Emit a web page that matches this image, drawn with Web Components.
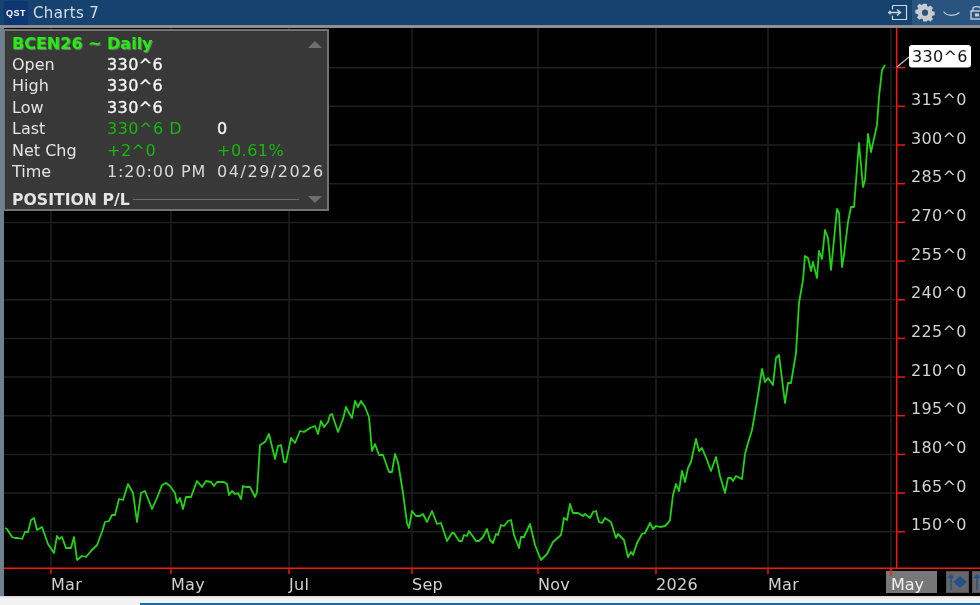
<!DOCTYPE html>
<html>
<head>
<meta charset="utf-8">
<title>Charts 7</title>
<style>
    html, body { margin: 0; padding: 0; background: #000; overflow: hidden; }
</style>
</head>
<body>
<app-window>
    <title-bar slot="top" caption="Charts 7"></title-bar>
    <chart-view>
        <quote-panel symbol="BCEN26 ~ Daily" footer="POSITION P/L">
            <quote-row label="Open" a="330^6"></quote-row>
            <quote-row label="High" a="330^6"></quote-row>
            <quote-row label="Low" a="330^6"></quote-row>
            <quote-row label="Last" a="330^6 D" b="0" tone="up-a"></quote-row>
            <quote-row label="Net Chg" a="+2^0" b="+0.61%" tone="up"></quote-row>
            <quote-row label="Time" a="1:20:00 PM" b="04/29/2026" tone="dim"></quote-row>
        </quote-panel>
    </chart-view>
</app-window>

<script>
const FONT = '"DejaVu Sans", "Liberation Sans", sans-serif';

class AppWindow extends HTMLElement {
    constructor() {
        super();
        this.attachShadow({ mode: 'open' });
        this.shadowRoot.innerHTML = `
<style>
    :host {
        display: flex;
        flex-direction: column;
        width: 980px;
        height: 605px;
        overflow: hidden;
        background: #15426e;
        font-family: ${FONT};
        filter: blur(.35px);
    }
    .body {
        flex: 1;
        display: flex;
        flex-direction: column;
        min-height: 0;
        border-top: 3px solid #8d9092;
    }
    .main { height: 568px; display: flex; border-left: 4px solid #6f8091; }
    .foot {
        flex: 1;
        background: linear-gradient(#d8d8d8, #f3f3f3 30%, #f1f1f1);
        position: relative;
    }
    .foot i {
        position: absolute;
        left: 140px;
        right: 0;
        bottom: 0;
        height: 2px;
        background: #1f6aa5;
    }
</style>
<slot name="top"></slot>
<div class="body">
    <div class="main"><slot></slot></div>
    <div class="foot"><i></i></div>
</div>`;
    }
}

class TitleBar extends HTMLElement {
    constructor() {
        super();
        this.attachShadow({ mode: 'open' });
        this.shadowRoot.innerHTML = `
<style>
    :host {
        display: flex;
        align-items: center;
        height: 25px;
        background: #15426e;
        color: #d5dde5;
    }
    .logo {
        width: 24px;
        height: 24px;
        margin-left: 4px;
        background: #0d3672;
        color: #fff;
        font: bold 9px "Liberation Sans", sans-serif;
        letter-spacing: .5px;
        display: flex;
        align-items: center;
        justify-content: center;
    }
    .caption {
        margin-left: 5px;
        font-size: 15px;
        letter-spacing: .35px;
        flex: 1;
    }
    .tools {
        display: flex;
        align-items: center;
        height: 100%;
    }
    .tools .right {
        display: flex;
        align-items: center;
        gap: 8px;
        height: 100%;
        padding-left: 3px;
        background: #2a5480;
    }
    svg { display: block; overflow: visible; }
    .lock { margin-left: 2px; }
</style>
<div class="logo">QST</div>
<div class="caption"></div>
<div class="tools">
    <svg width="24" height="25" viewBox="0 0 24 25" fill="none" stroke="#cfd6dc" stroke-width="1.2">
        <path d="M4.5 5.5H18.5V19.5H4.5V15.5M4.5 9.5V5.5"/>
        <path d="M0 12.5H12M9 9.5L12.5 12.5L9 15.5M2 10.5V14.5" stroke-width="1.4"/>
    </svg>
    <div class="right">
        <svg width="20" height="25" viewBox="0 0 20 25" fill="#c9cccf">
            <path fill-rule="evenodd" d="M8 3h4l.5 2.6 1.6.7 2.2-1.5 2.8 2.8-1.5 2.2.7 1.6 2.7.6v4l-2.7.5-.7 1.6 1.5 2.2-2.8 2.8-2.2-1.5-1.6.7L12 23H8l-.5-2.6-1.6-.7-2.2 1.5L.9 18.4l1.5-2.2-.7-1.6L-1 14v-4l2.7-.6.7-1.6-1.5-2.2 2.8-2.8 2.2 1.5 1.6-.7zM10 9.5a3.5 3.5 0 1 0 0 7 3.5 3.5 0 0 0 0-7z" transform="translate(1.2 1.2) scale(.88)"/>
        </svg>
        <svg width="17" height="25" viewBox="0 0 17 25" fill="none" stroke="#c6ced6" stroke-width="1.1">
            <path d="M0.5 11.5C4 16.5 12 16.5 16.5 12.5"/>
        </svg>
        <svg class="lock" width="10" height="25" viewBox="0 0 10 25" fill="none" stroke="#c6ced6" stroke-width="1.4">
            <path d="M3 11V8.5C3 6 10 6 10 8.5"/>
            <rect x="1" y="11" width="13" height="8"/>
            <rect x="5" y="13.5" width="4" height="3" fill="#c6ced6" stroke="none"/>
        </svg>
    </div>
</div>`;
        this.shadowRoot.querySelector('.caption').textContent = this.getAttribute('caption');
    }
}

// digitized closing prices, in page pixels
const PRICE_LINE = [
    [5,528],[7,529],[12,537],[15,538],[18,538],[22,539],[25,532],[28,532],[31,520],[34,518],[37,530],[42,527],
    [48,544],[54,553],[57,536],[59,539],[62,537],[66,548],[71,548],[74,537],[77,560],[82,556],[86,557],[91,551],
    [97,545],[102,532],[105,522],[109,521],[112,515],[115,515],[119,499],[123,500],[128,484],[133,493],[137,522],
    [141,493],[145,491],[152,509],[157,498],[162,485],[166,483],[170,486],[175,493],[177,503],[180,498],[183,509],
    [186,497],[191,497],[197,481],[202,487],[206,481],[211,482],[214,486],[217,482],[224,482],[227,484],[229,495],
    [232,491],[235,494],[238,493],[241,499],[243,486],[246,487],[250,487],[255,497],[257,492],[260,445],[265,442],
    [269,434],[275,459],[278,446],[281,445],[284,462],[286,462],[291,438],[295,443],[300,431],[304,432],[310,428],
    [315,426],[318,434],[321,421],[324,427],[328,422],[330,415],[332,414],[338,432],[343,419],[346,407],[349,413],
    [352,418],[355,401],[358,407],[361,401],[365,407],[369,417],[372,451],[375,444],[379,455],[383,455],[389,472],
    [392,472],[395,454],[398,462],[403,493],[407,523],[409,528],[412,511],[416,516],[420,516],[423,514],[427,522],
    [432,511],[437,524],[441,523],[447,541],[452,533],[454,533],[459,541],[462,541],[464,535],[467,536],[469,531],
    [476,541],[479,541],[483,537],[487,529],[490,540],[493,543],[496,534],[498,535],[501,525],[504,526],[508,521],
    [511,520],[514,535],[519,548],[521,537],[524,537],[530,524],[535,545],[541,560],[547,554],[553,542],[561,535],
    [564,518],[567,520],[570,504],[573,513],[578,513],[583,516],[585,514],[590,518],[593,512],[596,511],[599,522],
    [602,523],[605,518],[611,522],[616,538],[618,534],[624,540],[628,557],[631,552],[633,555],[637,543],[642,534],
    [645,533],[650,523],[653,529],[656,526],[660,527],[665,526],[668,523],[670,520],[673,495],[676,484],[679,491],
    [682,471],[685,482],[688,468],[691,462],[696,439],[699,451],[702,448],[707,460],[711,471],[716,457],[720,476],
    [725,493],[728,478],[731,478],[733,481],[736,476],[742,479],[745,454],[748,443],[752,430],[755,413],[758,395],
    [762,369],[765,382],[768,378],[773,385],[776,358],[779,355],[785,403],[788,383],[791,383],[796,353],[799,303],
    [803,280],[805,256],[808,258],[811,271],[813,262],[817,278],[819,251],[822,259],[825,230],[828,238],[831,270],
    [837,209],[839,213],[842,267],[844,255],[848,222],[851,207],[854,207],[859,143],[863,187],[865,180],[868,134],
    [871,152],[877,125],[879,97],[882,70],[885,65]
];
const H_GRID = Array.from({ length: 13 }, (_, i) => 67.7 + i * 38.67);
const Y_LABELS = ['315^0','300^0','285^0','270^0','255^0','240^0','225^0','210^0','195^0','180^0','165^0','150^0'];
const MONTHS = [[51,'Mar'],[171,'May'],[289,'Jul'],[412,'Sep'],[538,'Nov'],[656,'2026'],[768,'Mar']];

class ChartView extends HTMLElement {
    constructor() {
        super();
        this.attachShadow({ mode: 'open' });
        const hLines = H_GRID.map(y => `<path d="M4 ${y}H896" class="grid"/><path d="M897 ${y}H905" class="axis"/>`).join('');
        const vLines = [...MONTHS.map(m => m[0]), 891].map(x => `<path d="M${x} 28V568" class="grid"/><path d="M${x} 568V574" class="axis"/>`).join('');
        const yText = Y_LABELS.map((t, i) => `<text x="911" y="${H_GRID[i + 1] - 1.5}" class="lbl">${t}</text>`).join('');
        const xText = MONTHS.map(m => `<text x="${m[0]}" y="590" class="lbl">${m[1]}</text>`).join('');
        const pts = PRICE_LINE.map(p => p.join(',')).join(' ');
        this.shadowRoot.innerHTML = `
<style>
    :host {
        display: block;
        position: relative;
        width: 976px;
        height: 568px;
        background: #000;
        overflow: hidden;
    }
    svg { display: block; position: absolute; left: 0; top: 0; }
    .grid { stroke: #1f1f1f; stroke-width: 1.5; fill: none; }
    .axis { stroke: #f01a0c; stroke-width: 1.5; fill: none; }
    .price { stroke: #22d414; stroke-width: 1.8; fill: none; stroke-linejoin: round; }
    .lbl { fill: #d2d2d2; font-family: ${FONT}; font-size: 16px; letter-spacing: .3px; }
    .last-bg { fill: #fff; }
    .last { fill: #111; font-family: ${FONT}; font-size: 16px; letter-spacing: .3px; }
    .btn { fill: #666; stroke: #555; }
    .btn-icon { fill: #24508c; stroke: #24508c; stroke-width: 1.5; }
</style>
<svg width="976" height="568" viewBox="4 28 976 568">
    ${hLines}
    ${vLines}
    <path d="M896.7 28V568M4 568.3H980" class="axis" stroke-width="1.6"/>
    <polyline points="${pts}" class="price"/>
    <path d="M897 67L909 57" stroke="#b5b5b5" stroke-width="1.4" fill="none"/>
    <rect x="909" y="45" width="62" height="22.5" rx="3" class="last-bg"/>
    <text x="912" y="62" class="last">330^6</text>
    ${yText}
    <rect x="886" y="571" width="51" height="22" fill="#777"/>
    <path d="M891 568V576" class="axis"/>
    ${xText}
    <text x="891" y="590" fill="#f0f0f0" font-family='"DejaVu Sans", sans-serif' font-size="16">May</text>
    <rect x="946.5" y="571.5" width="22" height="21" class="btn"/>
    <path d="M951 575V590M948.5 578L951 575L953.5 578" class="btn-icon" fill="none"/>
    <path d="M960 577L965.5 582L960 587L954.5 582Z" class="btn-icon"/>
    <rect x="972.5" y="571.5" width="22" height="21" class="btn"/>
    <path d="M977 575V590M974.5 578L977 575L979.5 578" class="btn-icon" fill="none"/>
</svg>
<slot></slot>`;
    }
}

class QuotePanel extends HTMLElement {
    constructor() {
        super();
        this.attachShadow({ mode: 'open' });
        this.shadowRoot.innerHTML = `
<style>
    :host {
        display: flex;
        flex-direction: column;
        position: absolute;
        left: 0;
        top: 1px;
        width: 325px;
        height: 182px;
        box-sizing: border-box;
        padding: 2px 0 0 7px;
        background: rgba(58, 58, 58, .97);
        border: 2px solid #737373;
        border-left-width: 1px;
        font-size: 16px;
        color: #e4e4e4;
    }
    .head {
        height: 20.5px;
        line-height: 22px;
        color: #22f00c;
        font-weight: bold;
        font-size: 16px;
        text-shadow: 1px 1px 1px #777;
    }
    .rows { display: flex; flex-direction: column; }
    .foot {
        display: flex;
        align-items: center;
        gap: 3px;
        margin-top: 6.5px;
        height: 21px;
        font-weight: bold;
        font-size: 15.7px;
    }
    .foot i { width: 166px; height: 0; border-top: 1px solid #6f6f6f; }
    .up, .down {
        position: absolute;
        right: 5px;
        width: 0;
        height: 0;
        border-left: 7px solid transparent;
        border-right: 7px solid transparent;
    }
    .up { top: 10px; border-bottom: 7px solid #6f6f6f; }
    .down { bottom: 6px; border-top: 7px solid #6f6f6f; }
</style>
<div class="head"></div>
<div class="rows"><slot></slot></div>
<div class="foot"><span></span><i></i></div>
<div class="up"></div>
<div class="down"></div>`;
        this.shadowRoot.querySelector('.head').textContent = this.getAttribute('symbol');
        this.shadowRoot.querySelector('.foot span').textContent = this.getAttribute('footer');
    }
}

class QuoteRow extends HTMLElement {
    constructor() {
        super();
        this.attachShadow({ mode: 'open' });
        this.shadowRoot.innerHTML = `
<style>
    :host {
        display: grid;
        grid-template-columns: 95px 110px auto;
        height: 21.5px;
        line-height: 21.5px;
        white-space: nowrap;
    }
    .a, .b { color: #f4f4f4; -webkit-text-stroke: .35px #f4f4f4; letter-spacing: .4px; }
    :host([tone="up-a"]) .a { color: #14b90a; -webkit-text-stroke: 0; letter-spacing: .5px; }
    :host([tone="up"]) .a, :host([tone="up"]) .b { color: #14b90a; -webkit-text-stroke: 0; letter-spacing: .5px; }
    :host([tone="dim"]) .a { color: #d8d8d8; -webkit-text-stroke: 0; letter-spacing: .9px; }
    :host([tone="dim"]) .b { color: #d8d8d8; -webkit-text-stroke: 0; letter-spacing: 1.55px; }
</style>
<span class="l"></span><span class="a"></span><span class="b"></span>`;
        this.shadowRoot.querySelector('.l').textContent = this.getAttribute('label');
        this.shadowRoot.querySelector('.a').textContent = this.getAttribute('a');
        this.shadowRoot.querySelector('.b').textContent = this.getAttribute('b') || '';
    }
}

customElements.define('app-window', AppWindow);
customElements.define('title-bar', TitleBar);
customElements.define('chart-view', ChartView);
customElements.define('quote-panel', QuotePanel);
customElements.define('quote-row', QuoteRow);
</script>
</body>
</html>
